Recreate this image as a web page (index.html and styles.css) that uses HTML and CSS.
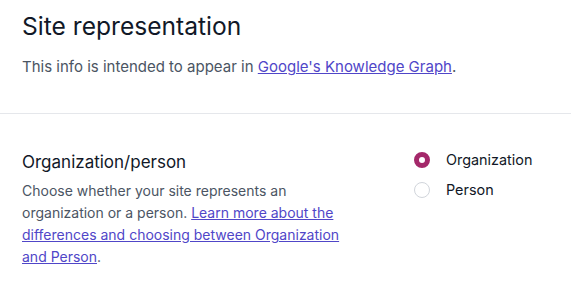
FILE: index.html
```html
<!DOCTYPE html>
<html>
<head>
<meta charset="utf-8">
<link rel="stylesheet" href="styles.css">
</head>
<body>
<header class="head">
  <h1 class="title">Site representation</h1>
  <p class="intro">This info is intended to appear in <a href="#">Google's Knowledge Graph</a>.</p>
</header>
<section class="row">
  <div class="info">
    <h2 class="sub">Organization/person</h2>
    <p class="desc">Choose whether your site represents an organization or a person. <a href="#">Learn more about the differences and choosing between Organization and Person</a>.</p>
  </div>
  <div class="options">
    <label class="opt"><span class="radio checked"></span>Organization</label>
    <label class="opt"><span class="radio"></span>Person</label>
  </div>
</section>
</body>
</html>
```
FILE: styles.css
```css
* { box-sizing: border-box; }
body {
  margin: 0;
  font-family: Inter, "Noto Sans", sans-serif;
  background: #fff;
  color: #4b5563;
}
.head {
  padding: 10px 22px 36px;
  border-bottom: 1px solid #e5e7eb;
}
.title {
  margin: 0;
  font-size: 24.6px;
  font-weight: 400;
  color: #111827;
  line-height: 32px;
}
.intro {
  margin: 15px 0 0;
  font-size: 15px;
  line-height: 20px;
}
a { color: #5046c8; text-decoration: underline; }
.row {
  display: flex;
  justify-content: space-between;
  padding: 36px 25px 0 22px;
}
.info { width: 325px; }
.sub {
  margin: 0;
  font-size: 17px;
  font-weight: 400;
  color: #111827;
  line-height: 24px;
}
.desc {
  margin: 6px 0 0;
  font-size: 14px;
  line-height: 22px;
}
.options {
  display: flex;
  flex-direction: column;
  gap: 10px;
  width: 132px;
}
.opt {
  display: flex;
  align-items: center;
  gap: 16px;
  font-size: 14.4px;
  color: #111827;
  line-height: 20px;
}
.radio {
  width: 16px;
  height: 16px;
  border-radius: 50%;
  border: 1px solid #d1d5db;
  background: #fff;
  flex: none;
}
.radio.checked {
  border: 5px solid #a4286a;
}
```
